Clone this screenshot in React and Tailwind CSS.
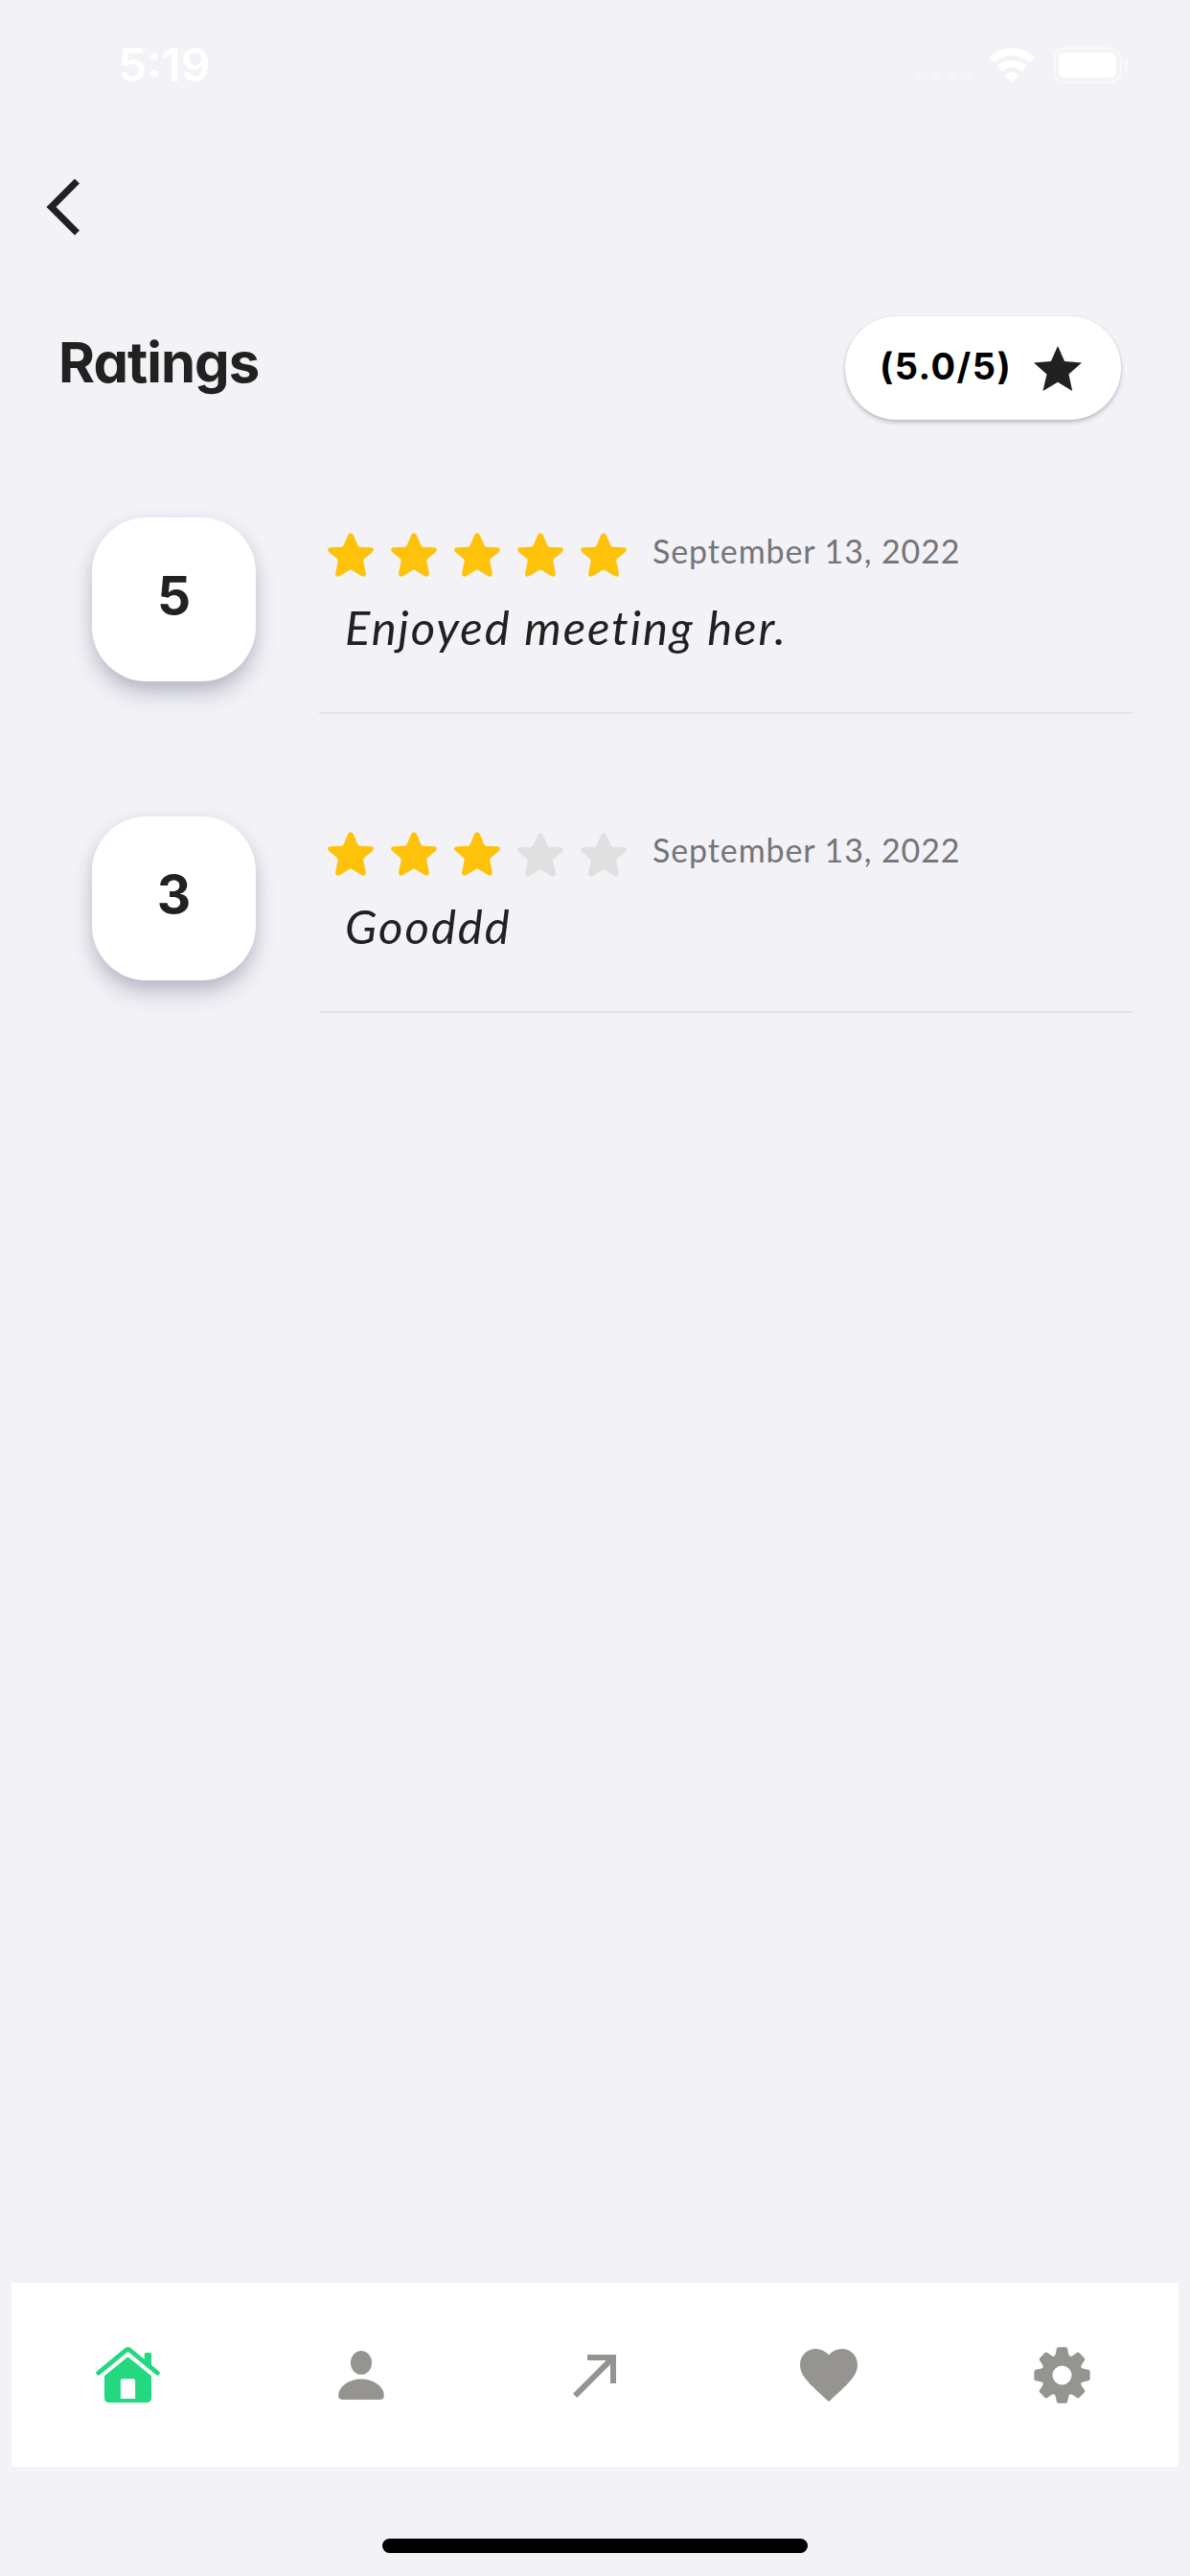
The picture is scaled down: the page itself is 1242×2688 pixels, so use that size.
import React from "react";

const REVIEWS = [
  { score: 5, date: "September 13, 2022", comment: "Enjoyed meeting her." },
  { score: 3, date: "September 13, 2022", comment: "Gooddd" },
];

function StatusBar() {
  return (
    <header className="flex h-[187px] justify-between pl-[123px] pr-[64px] pt-[39px] text-white">
      <span className="h-[58px] font-['Inter',sans-serif] text-[48px] font-semibold leading-[58px]">
        5:19
      </span>
      <div className="flex h-[58px] items-center">
        <div className="mt-[23px] mr-[19px] flex gap-[4px]">
          {[0, 1, 2, 3].map((i) => (
            <span key={i} className="h-[11px] w-[11px] rounded-full bg-[#f5f5f9]" />
          ))}
        </div>
        <svg className="mr-[19px] h-[36px] w-[48px]" viewBox="0 0 143 108" fill="currentColor">
          <path d="M0 31 Q32 0 71.500 0 T143 31 L130 45 Q127 47 124 45 Q100 23 71.500 23 T19 45 Q16 47 13 45Z" />
          <path d="M25 57 Q45 38 71.500 38 T118 57 L104 71 Q101 73 98 71 Q87 61 71.500 61 T45 71 Q42 73 39 71Z" />
          <path d="M50 85 Q60 76 71.500 76 T93 85 L74 106 Q71.500 109 69 106Z" />
        </svg>
        <div className="flex items-center gap-[3px]">
          <div className="h-[38px] w-[72px] rounded-[12px] border-[3px] border-[#f8f8fb] p-[3px]">
            <div className="h-full w-full rounded-[5px] bg-white" />
          </div>
          <span className="h-[13px] w-[4px] rounded-r-full bg-[#f8f8fb]" />
        </div>
      </div>
    </header>
  );
}

function RatingStar({ filled }) {
  return (
    <svg
      className={filled ? "h-[46px] w-[48px] text-[#ffc20a]" : "mt-[1px] h-[46px] w-[48px] text-[#e0e0e0]"}
      viewBox="0 0 144 138"
      fill="currentColor"
    >
      <path d="M64 6 Q72 -5 80 6 L94 39 Q96 43 100 44 L136 46 Q149 49 140 60 L114 82 Q111 85 112 89 L120 129 Q118 140 107 136 L76 117 Q72 114 68 117 L37 136 Q25 140 24 129 L32 89 Q32 85 30 82 L4 60 Q-5 49 8 46 L44 44 Q48 43 50 39Z" />
    </svg>
  );
}

function Review({ score, date, comment }) {
  return (
    <article className="flex">
      <div className="flex h-[171px] w-[171px] items-center justify-center rounded-[57px] bg-white pb-[9px] font-['Inter',sans-serif] text-[55px] font-bold text-[#212121] shadow-[0_14px_24px_-3px_rgba(40,40,75,0.28),0_2px_18px_rgba(40,40,75,0.06)]">
        {score}
      </div>
      <div className="ml-[66px] h-[205px] w-[849px] border-b-2 border-[#e3e3e8] pl-[9px] pt-[14px]">
        <div className="flex h-[50px] items-center">
          <div className="flex gap-[18px]">
            {[1, 2, 3, 4, 5].map((n) => (
              <RatingStar key={n} filled={n <= score} />
            ))}
          </div>
          <span className="ml-[27px] whitespace-nowrap pb-[8px] text-[34px] leading-[40px] tracking-[0.9px] text-[#757577]">
            {date}
          </span>
        </div>
        <p className="mt-[20px] pl-[18px] text-[49px] italic leading-[60px] tracking-[2px] text-[#212121]">
          {comment}
        </p>
      </div>
    </article>
  );
}

function HomeIcon() {
  return (
    <svg className="h-[58px] w-[67px]" viewBox="0 0 200 175">
      <path d="M7 82 L94 10 Q100 5 106 10 L193 82" fill="none" stroke="currentColor" strokeWidth="14.500" strokeLinecap="round" />
      <path d="M152 45 V23 Q152 18 157 18 H169 Q174 18 174 23 V64Z" fill="currentColor" />
      <path
        d="M97 33 Q100 30 103 33 L174 91 V160 Q174 175 159 175 H41 Q26 175 26 160 V91Z M83 100 Q77 100 77 106 V163 H123 V106 Q123 100 117 100Z"
        fill="currentColor"
        fillRule="evenodd"
      />
    </svg>
  );
}

function PersonIcon() {
  return (
    <svg className="h-[51px] w-[48px]" viewBox="0 0 142 152" fill="currentColor">
      <ellipse cx="71" cy="37" rx="33" ry="37" />
      <path d="M0 140 C0 112 32 88 71 88 S142 112 142 140 Q142 152 128 152 H14 Q0 152 0 140Z" />
    </svg>
  );
}

function ArrowIcon() {
  return (
    <svg className="h-[45px] w-[45px]" viewBox="0 0 135 135" fill="currentColor">
      <path d="M45 0H135V90H117V31L13 135L0 122L104 18H45Z" />
    </svg>
  );
}

function HeartIcon() {
  return (
    <svg className="h-[55px] w-[60px]" viewBox="0 0 181 166" fill="currentColor">
      <path d="M90.500 19 C78 6 64 0 50 0 C21 0 0 22 0 50 C0 86 30 111 90.500 166 C151 111 181 86 181 50 C181 22 160 0 131 0 C117 0 103 6 90.500 19Z" />
    </svg>
  );
}

function GearIcon() {
  return (
    <svg className="h-[59px] w-[59px]" viewBox="-88 -88 176 176" fill="currentColor">
      <circle r="46.500" fill="none" stroke="currentColor" strokeWidth="33" />
      {[0, 45, 90, 135, 180, 225, 270, 315].map((angle) => (
        <path
          key={angle}
          transform={`rotate(${angle})`}
          d="M-27 -56 Q-21 -61 -20 -67 L-17 -82 Q-16 -87 -11 -87 H11 Q16 -87 17 -82 L20 -67 Q21 -61 27 -56Z"
        />
      ))}
    </svg>
  );
}

export default function App() {
  return (
    <div className="flex h-[2688px] w-[1242px] flex-col overflow-hidden bg-[#f2f2f7] font-['Lato',sans-serif]">
      <StatusBar />
      <button className="ml-[48px] h-[59px] w-[35px] shrink-0 text-[#212121]" aria-label="Back">
        <svg className="h-[59px] w-[35px]" viewBox="0 0 35 59" fill="currentColor">
          <path d="M30 -0.500L35 4.500L10.500 29L35 53.500L30 58.500L0.500 29Z" />
        </svg>
      </button>
      <section className="mt-[84px] flex h-[108px] shrink-0 items-center justify-between pl-[61px] pr-[72px]">
        <h1 className="pb-[11px] text-[58px] font-bold tracking-[-1px] text-[#212121] [font-feature-settings:'cv11'] font-['Inter',sans-serif]">
          Ratings
        </h1>
        <div className="flex h-[108px] w-[288px] items-center rounded-full bg-white pl-[36px] shadow-[0_3px_4px_rgba(40,40,75,0.24),0_0_3px_rgba(40,40,75,0.08)]">
          <span className="w-[142px] whitespace-nowrap pb-[3px] font-['Inter',sans-serif] text-[38px] font-bold tracking-[1.4px] text-black">
            (5.0/5)
          </span>
          <svg className="ml-[19px] h-[47px] w-[50px] text-[#212121]" viewBox="0 0 148 139" fill="currentColor">
            <path d="M74 0L95 47L148 52L108 87L119 139L74 112L28 139L40 87L0 52L53 47Z" />
          </svg>
        </div>
      </section>
      <main className="flex flex-1 flex-col gap-[107px] pl-[96px] pt-[102px]">
        {REVIEWS.map((review) => (
          <Review key={review.score} {...review} />
        ))}
      </main>
      <nav className="mx-[12px] mb-[75px] grid h-[192px] shrink-0 grid-cols-5 place-items-center bg-white text-[#959490]">
        <button className="text-[#24d880]" aria-label="Home"><HomeIcon /></button>
        <button aria-label="Profile"><PersonIcon /></button>
        <button className="mt-[3px]" aria-label="Share"><ArrowIcon /></button>
        <button aria-label="Favorites"><HeartIcon /></button>
        <button aria-label="Settings"><GearIcon /></button>
      </nav>
      <div className="mx-auto mb-[24px] h-[15px] w-[444px] shrink-0 rounded-full bg-black" />
    </div>
  );
}
